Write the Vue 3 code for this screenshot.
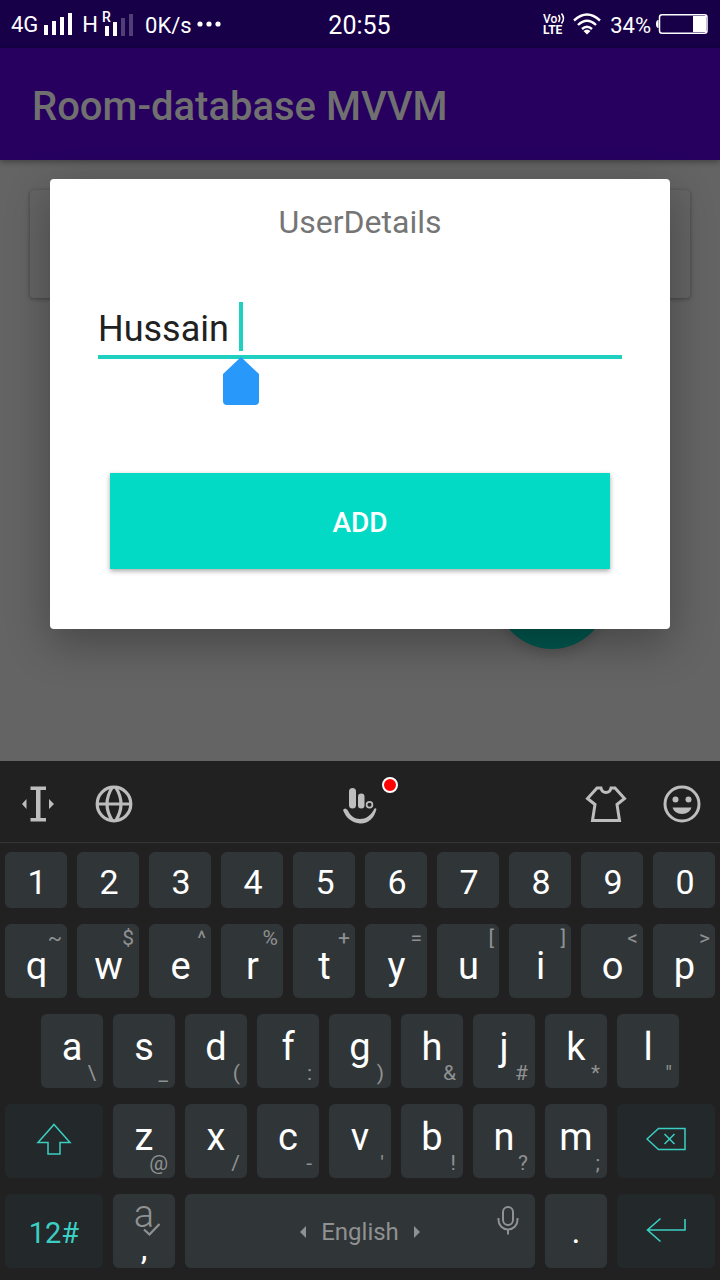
<script setup>
import { ref } from 'vue'

const name = ref('Hussain ')
const digits = '1234567890'.split('')
const topRow = [
  ['q', '~'], ['w', '$'], ['e', '^'], ['r', '%'], ['t', '+'],
  ['y', '='], ['u', '['], ['i', ']'], ['o', '<'], ['p', '>'],
]
const homeRow = [
  ['a', '\\'], ['s', '_'], ['d', '('], ['f', ':'], ['g', ')'],
  ['h', '&'], ['j', '#'], ['k', '*'], ['l', '"'],
]
const lowRow = [
  ['z', '@'], ['x', '/'], ['c', '-'], ['v', "'"], ['b', '!'], ['n', '?'], ['m', ';'],
]
</script>

<template>
  <div class="screen">
    <header class="status">
      <div class="status-left">
        <span class="net">4G</span>
        <svg class="bars" width="28" height="24" viewBox="0 0 28 24" fill="#fff">
          <path d="M0 13h4v10H0zM8 9h4v14H8zM16 5h4v18h-4zM24 1h4v22h-4z" />
        </svg>
        <span class="net">H</span>
        <svg class="roam" width="32" height="30" viewBox="0 0 32 30" fill="#fff">
          <text x="0" y="13" class="roam-text">R</text>
          <path d="M3 17h4v10H3zM11 13h4v14h-4z" />
          <path d="M19 9h4v18h-4zM27 5h4v22h-4z" opacity="0.25" />
        </svg>
        <span class="rate">0K/s</span>
        <svg width="26" height="8" viewBox="0 0 26 8" fill="#fff">
          <circle cx="4" cy="4" r="2.6" /><circle cx="13" cy="4" r="2.6" /><circle cx="22" cy="4" r="2.6" />
        </svg>
      </div>
      <time class="clock">20:55</time>
      <div class="status-right">
        <svg width="25" height="30" viewBox="0 0 25 30" fill="#fff">
          <text x="0" y="14" class="volte-text">Vo</text>
          <path d="M15.500 6q2.500 3.500 0 7M18.500 4.500q4 5 0 10" fill="none" stroke="#fff" stroke-width="1.600" />
          <text x="0" y="25" class="lte-text">LTE</text>
        </svg>
        <svg class="wifi" width="28" height="22" viewBox="0 0 28 22" fill="none" stroke="#fff" stroke-width="2.400">
          <path d="M1 7.500q13-12 26 0M5 12q9-8.500 18 0M9 16q5-4.500 10 0" />
          <path d="M10.500 18q3.500-3 7 0L14 21.500z" fill="#fff" stroke="none" />
        </svg>
        <span class="percent">34%</span>
        <svg width="52" height="20" viewBox="0 0 52 20">
          <path d="M2.500 6Q0 6 0 10t2.500 4z" fill="#fff" />
          <rect x="3.500" y="0.750" width="47.500" height="18.500" rx="2.500" fill="none" stroke="#fff" stroke-width="1.500" />
          <path d="M37 2h13v16H37z" fill="#fff" />
        </svg>
      </div>
    </header>

    <div class="appbar"><h1>Room-database MVVM</h1></div>

    <main class="content">
      <div class="card"></div>
      <button class="fab" aria-label="Add user"></button>

      <section class="dialog" role="dialog" aria-label="UserDetails">
        <h2>UserDetails</h2>
        <div class="field">
          <input v-model="name" type="text" aria-label="Name" />
          <span class="caret"></span>
          <svg class="handle" width="36" height="48" viewBox="0 0 36 48">
            <path d="M18 0L36 17v27q0 4-4 4H4q-4 0-4-4V17z" fill="#2998fb" />
          </svg>
        </div>
        <button class="add">ADD</button>
      </section>
    </main>

    <section class="keyboard">
      <div class="tools">
        <button aria-label="Move cursor">
          <svg width="34" height="38" viewBox="0 0 34 38" fill="#bdbdbd">
            <path d="M9.500 1.500h15.500v3.500h-5.500v28H25v3.500H9.500V33H15V5H9.500zM1 19l4.500-5v10zM33 19l-5-5v10z" />
          </svg>
        </button>
        <button aria-label="Language">
          <svg width="38" height="38" viewBox="0 0 38 38" fill="none" stroke="#bdbdbd" stroke-width="3.200">
            <circle cx="19" cy="19" r="16.800" />
            <path d="M2 19h34M17.500 2Q6.500 19 17.500 36M20.500 2Q31.500 19 20.500 36" />
          </svg>
        </button>
        <button class="touch" aria-label="Assistant">
          <svg width="36" height="38" viewBox="0 0 36 38" fill="#bdbdbd">
            <rect x="7" y="2" width="7" height="20.500" rx="3.500" />
            <rect x="16" y="7.500" width="6.500" height="15" rx="3.250" />
            <circle cx="27.500" cy="18.800" r="2.900" fill="none" stroke="#bdbdbd" stroke-width="1.700" />
            <path d="M1 24q2-3 4.500 0c3 6 7 9 12.500 9s11-3 14.500-10.500q1-.8 2 .5C32.500 32 26 38 18 37.500S4 32 1 24z" />
          </svg>
          <span class="dot"></span>
        </button>
        <button class="shirt" aria-label="Themes">
          <svg width="42" height="38" viewBox="0 0 42 38" fill="none" stroke="#bdbdbd" stroke-width="3">
            <path d="M12 3h4q1 4.500 5 4.500T26 3h4l9.500 10.500-7.500 6 2.500 16h-27l2.500-16-7.500-6z" />
          </svg>
        </button>
        <button aria-label="Emoji">
          <svg width="38" height="38" viewBox="0 0 38 38" fill="#bdbdbd">
            <circle cx="19" cy="19" r="17" fill="none" stroke="#bdbdbd" stroke-width="3" />
            <circle cx="12.500" cy="14.500" r="3" /><circle cx="25.500" cy="14.500" r="3" />
            <path d="M9.500 22.500h19Q26.500 29 19 29t-9.500-6.500z" />
          </svg>
        </button>
      </div>

      <div class="keys">
        <div class="row digits">
          <button v-for="d in digits" :key="d" class="key">{{ d }}</button>
        </div>
        <div class="row upper">
          <button v-for="[k, h] in topRow" :key="k" class="key">{{ k }}<span class="hint">{{ h }}</span></button>
        </div>
        <div class="row lower home">
          <button v-for="[k, h] in homeRow" :key="k" class="key">{{ k }}<span class="hint">{{ h }}</span></button>
        </div>
        <div class="row lower">
          <button class="key wide" aria-label="Shift">
            <svg width="36" height="32" viewBox="0 0 36 32" fill="none" stroke="#3bcfc3" stroke-width="1.500">
              <path d="M18 1.500L34 19.500H24V31H12V19.500H2z" />
            </svg>
          </button>
          <button v-for="[k, h] in lowRow" :key="k" class="key">{{ k }}<span class="hint">{{ h }}</span></button>
          <button class="key wide" aria-label="Backspace">
            <svg width="40" height="24" viewBox="0 0 40 24" fill="none" stroke="#3bcfc3" stroke-width="1.500">
              <path d="M12.500 1.500H39v21H12.500L1 12zM18.500 7l10 10M28.500 7l-10 10" />
            </svg>
          </button>
        </div>
        <div class="row bottom">
          <button class="key wide symbols">12#</button>
          <button class="key comma">
            <span class="suggest">a<svg width="18" height="14" viewBox="0 0 18 14" fill="none" stroke="#8f9192" stroke-width="2.200"><path d="M1 6.500l5.500 5L16.500 1" /></svg></span>
            <span class="mark">,</span>
          </button>
          <button class="key space">
            <svg width="6" height="12" viewBox="0 0 6 12" fill="#8f9192"><path d="M6 0v12L0 6z" /></svg>
            <span>English</span>
            <svg width="6" height="12" viewBox="0 0 6 12" fill="#8f9192"><path d="M0 0v12l6-6z" /></svg>
            <svg class="mic" width="22" height="30" viewBox="0 0 22 30" fill="none" stroke="#8f9192" stroke-width="2">
              <rect x="6" y="2" width="10" height="18" rx="5" />
              <path d="M1.500 13v2a9.500 9.500 0 0 0 19 0v-2M11 24.500V29.500" />
            </svg>
          </button>
          <button class="key period">.</button>
          <button class="key wide enter" aria-label="Enter">
            <svg width="40" height="26" viewBox="0 0 40 26" fill="none" stroke="#3bcfc3" stroke-width="1.600">
              <path d="M39 2v11H1.500M14.500 1.500L1.500 13l13 11.500" />
            </svg>
          </button>
        </div>
      </div>
    </section>
  </div>
</template>

<style>
body { background: #646464; }
</style>

<style scoped>
* { box-sizing: border-box; }
.screen {
  min-height: 100vh;
  display: flex;
  flex-direction: column;
  font-family: Roboto, "Noto Sans", sans-serif;
  background: #646464;
}
button { border: 0; margin: 0; padding: 0; font-family: inherit; cursor: pointer; }
svg { display: block; flex: none; }
h1, h2 { margin: 0; }

.status {
  height: 48px;
  display: grid;
  grid-template-columns: 1fr auto 1fr;
  align-items: center;
  padding: 0 12px 0 11px;
  background: #170048;
  color: #fff;
  font-size: 22px;
}
.status-left, .status-right { display: flex; align-items: center; }
.status-right { justify-content: flex-end; }
.bars { margin: 0 10px 0 6px; }
.roam { margin: 0 11px 0 4px; }
.rate { padding: 2px 4px 0 0; }
.clock { font-size: 25px; padding-top: 2px; }
.roam-text { font-size: 14px; font-weight: 500; }
.volte-text { font-size: 12px; font-weight: 500; }
.lte-text { font-size: 12px; font-weight: 700; }
.wifi { margin: 0 9px 0 5px; }
.percent { padding: 2px 5px 0 0; }

.appbar {
  height: 112px;
  display: flex;
  align-items: center;
  padding: 6px 32px 0;
  background: #27005f;
  box-shadow: 0 2px 6px rgba(0, 0, 0, 0.35);
  z-index: 1;
}
h1 { font-size: 40px; line-height: 48px; font-weight: 500; color: #707070; }

.content { flex: 1; position: relative; }
.card {
  height: 108px;
  margin: 30px 30px 0;
  border-radius: 4px;
  background: #646464;
  box-shadow: 0 1px 4px rgba(0, 0, 0, 0.35);
}
.fab {
  position: absolute;
  right: 112px;
  bottom: 112px;
  width: 112px;
  height: 112px;
  border-radius: 50%;
  background: #01574f;
  box-shadow: 0 6px 12px rgba(0, 0, 0, 0.15);
}
.dialog {
  position: absolute;
  top: 19px;
  left: 50px;
  right: 50px;
  z-index: 2;
  padding: 24px 48px 60px;
  border-radius: 4px;
  background: #fff;
  box-shadow: 0 14px 44px rgba(0, 0, 0, 0.3);
}
h2 { font-size: 32px; line-height: 38px; font-weight: 400; color: #757575; text-align: center; }
.field { position: relative; margin-top: 59px; }
.field input {
  display: block;
  width: 100%;
  height: 59px;
  padding: 2px 0 0;
  border: 0;
  border-bottom: 4px solid #1fd0c0;
  outline: 0;
  background: none;
  font: 36px/48px Roboto, "Noto Sans", sans-serif;
  color: #212121;
}
.caret { position: absolute; left: 141px; top: 2px; width: 4px; height: 49px; background: #1fd0c0; }
.handle { position: absolute; left: 125px; top: 57px; }
.add {
  display: block;
  width: calc(100% - 24px);
  height: 96px;
  margin: 114px 12px 0;
  padding-top: 2px;
  background: #03dac5;
  color: #fff;
  font-size: 28px;
  font-weight: 500;
  box-shadow: 0 2px 5px rgba(0, 0, 0, 0.35);
}

.keyboard { position: relative; z-index: 3; background: #212121; }
.tools {
  height: 82px;
  display: flex;
  align-items: center;
  padding: 4px 19px 0 21px;
  border-bottom: 1px solid #353535;
}
.tools button { position: relative; background: none; }
.tools button + button { margin-left: 40px; }
.tools button + .touch { margin: 2px auto 0; padding-left: 2px; }
.touch .dot {
  position: absolute;
  top: -9px;
  right: -20px;
  width: 16px;
  height: 16px;
  border: 2px solid #fff;
  border-radius: 50%;
  background: #f00;
}
.tools .touch + .shirt { margin-left: 0; }
.tools .shirt + button { margin-left: 36px; }

.keys { display: grid; gap: 16px; padding: 9px 0 12px; }
.row { display: grid; grid-template-columns: repeat(20, 1fr); }
.key {
  grid-column: span 2;
  position: relative;
  display: flex;
  align-items: center;
  justify-content: center;
  height: 74px;
  margin: 0 5px;
  border-radius: 6px;
  background: #303537;
  color: #fff;
  font-size: 38px;
  line-height: 44px;
}
.digits .key { height: 56px; padding: 4px 0 0 2px; font-size: 34px; }
.upper .key { padding: 10px 0 0 1px; }
.lower .key { padding-bottom: 8px; }
.home .key:first-child { grid-column: 2 / span 2; }
.hint { position: absolute; right: 5px; top: 2px; font-size: 21px; line-height: 24px; color: #8f9192; }
.lower .hint { right: 7px; top: auto; bottom: 3px; }
.row .wide { grid-column: span 3; padding: 0; background: #23282a; }
.lower .wide { padding-bottom: 4px; }
.row .symbols { padding-top: 4px; font-size: 29px; color: #3bcfc3; }
.row .enter { padding-bottom: 2px; }
.row .space { grid-column: span 10; gap: 15px; padding-top: 2px; font-size: 24px; color: #8f9192; }
.mic { position: absolute; right: 16px; top: 11px; }
.row .period { font-size: 34px; }
.row .comma { flex-direction: column; justify-content: flex-start; }
.suggest { position: relative; height: 40px; font-weight: 300; line-height: 40px; color: #8f9192; }
.suggest svg { position: absolute; left: 9px; top: 29px; }
.mark { height: 28px; font-size: 34px; line-height: 28px; }
</style>
